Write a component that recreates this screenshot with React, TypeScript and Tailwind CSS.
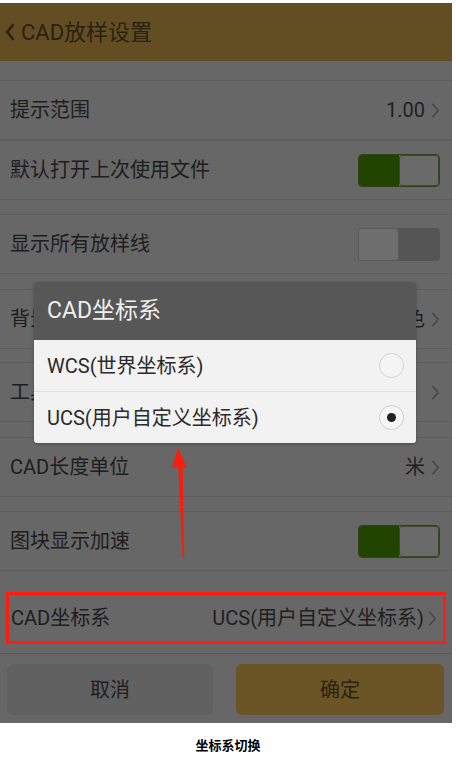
import React from 'react';

type Row = {
  label: string;
  value?: string;
  arrow?: boolean;
  toggle?: 'on' | 'off';
};

const Chevron: React.FC<{ className?: string }> = ({ className }) => (
  <svg viewBox="0 0 10 18" className={className} fill="none" stroke="currentColor" strokeWidth="1.6">
    <path d="M2 2l6 7-6 7" strokeLinecap="round" strokeLinejoin="round" />
  </svg>
);

const Toggle: React.FC<{ on: boolean }> = ({ on }) =>
  on ? (
    <div className="flex h-[33px] w-[82px] overflow-hidden rounded-[4px] border border-[#34421c]">
      <div className="w-[40px] bg-[#204300]" />
      <div className="flex-1 rounded-[3px] border border-[#3c4a22] bg-[#6a6a6a]" />
    </div>
  ) : (
    <div className="flex h-[33px] w-[82px] overflow-hidden rounded-[4px] bg-[#555555]">
      <div className="w-[41px] rounded-[3px] border border-[#5a5a5a] bg-[#6e6e6e]" />
      <div className="flex-1" />
    </div>
  );

const SettingRow: React.FC<{ row: Row }> = ({ row }) => (
  <div className="flex h-[60px] items-center justify-between border-y border-[#5e5e5e] pl-[10px] pr-[12px]">
    <span className="text-[20px] text-[#1d1d1d]">{row.label}</span>
    {row.toggle ? (
      <Toggle on={row.toggle === 'on'} />
    ) : (
      <div className="flex items-center gap-[6px] text-[20px] text-[#1f1f1f]">
        {row.value && <span>{row.value}</span>}
        <Chevron className="h-[17px] w-[9px] text-[#454545]" />
      </div>
    )}
  </div>
);

const Gap: React.FC<{ h: string }> = ({ h }) => <div className={h} />;

export default function App() {
  return (
    <div
      className="relative h-[757px] w-[456px] overflow-hidden bg-white"
      style={{ fontFamily: 'Roboto, "Noto Sans CJK SC", sans-serif' }}
    >
      <div className="relative mt-[3px] flex h-[720px] w-[452px] flex-col bg-[#676767]">
        {/* title bar */}
        <header className="flex h-[58px] items-center gap-[6px] bg-[#634d22] pl-[5px] text-[#2a2112]">
          <Chevron className="h-[18px] w-[10px] rotate-180 text-[#2a2112] [stroke-width:2.6]" />
          <span className="text-[22px]">CAD放样设置</span>
        </header>

        <Gap h="h-[19px]" />
        <SettingRow row={{ label: '提示范围', value: '1.00', arrow: true }} />
        <SettingRow row={{ label: '默认打开上次使用文件', toggle: 'on' }} />
        <Gap h="h-[14px]" />
        <SettingRow row={{ label: '显示所有放样线', toggle: 'off' }} />
        <Gap h="h-[15px]" />
        <SettingRow row={{ label: '背景颜色', value: '黑色', arrow: true }} />
        <Gap h="h-[13px]" />
        <SettingRow row={{ label: '工具栏设置', arrow: true }} />
        <Gap h="h-[15px]" />
        <SettingRow row={{ label: 'CAD长度单位', value: '米', arrow: true }} />
        <Gap h="h-[14px]" />
        <SettingRow row={{ label: '图块显示加速', toggle: 'on' }} />
        <Gap h="h-[15px]" />

        {/* highlighted row */}
        <div className="h-[68px] border-b border-[#5a5a5a] px-[6px] pt-[6px]">
          <div className="flex h-[52px] items-center justify-between border-[3px] border-[#ff1c10] pl-[2px] pr-[6px]">
            <span className="text-[20px] text-[#1d1d1d]">CAD坐标系</span>
            <div className="flex items-center gap-[4px] text-[20px] text-[#1f1f1f]">
              <span>UCS(用户自定义坐标系)</span>
              <Chevron className="h-[17px] w-[9px] text-[#454545]" />
            </div>
          </div>
        </div>

        {/* footer buttons */}
        <div className="flex flex-1 gap-[23px] px-[7px] pt-[10px] pb-[6px]">
          <button className="flex h-[51px] w-[206px] items-center justify-center rounded-[6px] bg-[#616161] text-[20px] text-[#1e1e1e]">
            取消
          </button>
          <button className="flex h-[51px] w-[208px] items-center justify-center rounded-[6px] bg-[#6b5426] text-[20px] text-[#2a2210]">
            确定
          </button>
        </div>

        {/* coordinate system picker */}
        <div className="absolute left-[34px] top-[279px] w-[382px] overflow-hidden rounded-[3px] shadow-[0_1px_3px_rgba(0,0,0,0.3)]">
          <div className="flex h-[58px] items-center bg-[#575757] pl-[13px] text-[23px] text-[#efefef]">
            CAD坐标系
          </div>
          <div className="bg-[#f2f2f2]">
            <div className="flex h-[52px] items-center justify-between border-b border-[#dedede] pl-[13px] pr-[12px]">
              <span className="text-[20px] text-[#2a2a2a]">WCS(世界坐标系)</span>
              <div className="h-[25px] w-[25px] rounded-full border border-[#d4d4d4] bg-[#f4f4f4]" />
            </div>
            <div className="flex h-[51px] items-center justify-between pl-[13px] pr-[12px]">
              <span className="text-[20px] text-[#2a2a2a]">UCS(用户自定义坐标系)</span>
              <div className="flex h-[25px] w-[25px] items-center justify-center rounded-full border border-[#cfcfcf] bg-[#f6f6f6]">
                <div className="h-[9px] w-[9px] rounded-full bg-[#222222]" />
              </div>
            </div>
          </div>
        </div>

        {/* annotation arrow */}
        <svg className="absolute left-[166px] top-[441px]" width="26" height="118" viewBox="0 0 26 118">
          <polygon points="12,4 21,24 16.6,22 18.2,114 16.6,114 12.2,22 6,24" fill="#ff1a0a" />
        </svg>
      </div>

      <div className="mt-[13px] text-center text-[13px] font-bold text-black">坐标系切换</div>
    </div>
  );
}
